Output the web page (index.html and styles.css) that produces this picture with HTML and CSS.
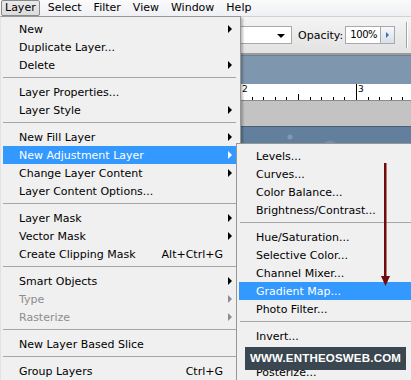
FILE: index.html
```html
<!DOCTYPE html>
<html lang="en">
<head>
    <meta charset="UTF-8">
    <meta name="viewport" content="width=device-width, initial-scale=1.0">
    <title>Layer Menu</title>
    <link rel="stylesheet" href="styles.css">
</head>
<body>
<div class="app">
    <div class="menubar">
        <span class="menubar-item open">Layer</span>
        <span class="menubar-item">Select</span>
        <span class="menubar-item">Filter</span>
        <span class="menubar-item">View</span>
        <span class="menubar-item">Window</span>
        <span class="menubar-item">Help</span>
    </div>

    <div class="options-bar">
        <div class="combo"><span class="combo-arrow"></span></div>
        <span class="opt-label">Opacity:</span>
        <div class="field">100%</div>
        <div class="spin"><span class="spin-arrow"></span></div>
        <div class="opt-sep"></div>
        <div class="check"></div>
    </div>

    <div class="doc-title"></div>

    <div class="ruler">
        <div class="ruler-seg">0</div>
        <div class="ruler-seg">1</div>
        <div class="ruler-seg">2</div>
        <div class="ruler-seg">3</div>
    </div>

    <div class="canvas">
        <div class="photo"></div>
    </div>
</div>

<ul class="menu main-menu">
    <li class="item">New<span class="sub-arrow"></span></li>
    <li class="item">Duplicate Layer...</li>
    <li class="item">Delete<span class="sub-arrow"></span></li>
    <li class="sep"></li>
    <li class="item">Layer Properties...</li>
    <li class="item">Layer Style<span class="sub-arrow"></span></li>
    <li class="sep"></li>
    <li class="item">New Fill Layer<span class="sub-arrow"></span></li>
    <li class="item active">New Adjustment Layer<span class="sub-arrow"></span></li>
    <li class="item">Change Layer Content<span class="sub-arrow"></span></li>
    <li class="item">Layer Content Options...</li>
    <li class="sep"></li>
    <li class="item">Layer Mask<span class="sub-arrow"></span></li>
    <li class="item">Vector Mask<span class="sub-arrow"></span></li>
    <li class="item">Create Clipping Mask<span class="shortcut">Alt+Ctrl+G</span></li>
    <li class="sep"></li>
    <li class="item">Smart Objects<span class="sub-arrow"></span></li>
    <li class="item disabled">Type<span class="sub-arrow"></span></li>
    <li class="item disabled">Rasterize<span class="sub-arrow"></span></li>
    <li class="sep"></li>
    <li class="item">New Layer Based Slice</li>
    <li class="sep"></li>
    <li class="item">Group Layers<span class="shortcut">Ctrl+G</span></li>
</ul>

<ul class="menu sub-menu">
    <li class="item">Levels...</li>
    <li class="item">Curves...</li>
    <li class="item">Color Balance...</li>
    <li class="item">Brightness/Contrast...</li>
    <li class="sep"></li>
    <li class="item">Hue/Saturation...</li>
    <li class="item">Selective Color...</li>
    <li class="item">Channel Mixer...</li>
    <li class="item active">Gradient Map...</li>
    <li class="item">Photo Filter...</li>
    <li class="sep"></li>
    <li class="item">Invert...</li>
    <li class="item">Threshold...</li>
    <li class="item">Posterize...</li>
</ul>

<svg class="pointer" width="12" height="130" viewBox="0 0 12 130">
    <rect x="4" y="3" width="2.5" height="115" fill="#700b0b"/>
    <polygon points="1,116 10,116 5.5,126" fill="#700b0b"/>
</svg>

<div class="watermark">WWW.ENTHEOSWEB.COM</div>
</body>
</html>
```

FILE: styles.css
```css
body {
    margin: 0;
    width: 411px;
    height: 380px;
    overflow: hidden;
    position: relative;
    font-family: "DejaVu Sans", sans-serif;
    font-size: 11px;
    color: #000;
    background-color: #c0c0c0;
}

/* workspace behind the menus */

.menubar {
    height: 16px;
    display: flex;
    align-items: center;
    padding-left: 1px;
    background: linear-gradient(#fbfbfc, #eef0f3);
}

.menubar-item {
    height: 14px;
    line-height: 14px;
    padding: 0 5px 0 4px;
    margin-right: 1px;
    border: 1px solid transparent;
    border-radius: 2px;
}

.menubar-item.open {
    padding: 0 3px 0 3px;
    margin-right: 3px;
    border-color: #8a8a8a;
    background: linear-gradient(#eaeaea, #dcdcdc);
}

.options-bar {
    height: 36px;
    display: flex;
    align-items: center;
    background: linear-gradient(#f4f4f4, #e2e2e2);
    border-top: 1px solid #d2d2d2;
    border-bottom: 2px solid #9b9b9b;
}

.options-bar > * {
    flex-shrink: 0;
}

.combo {
    width: 68px;
    height: 16px;
    margin-left: 222px;
    background-color: #fff;
    border: 1px solid #a9a9a9;
    position: relative;
}

.combo-arrow {
    position: absolute;
    right: 6px;
    top: 7px;
    border-top: 4px solid #000;
    border-left: 4px solid transparent;
    border-right: 4px solid transparent;
}

.opt-label {
    margin-left: 6px;
}

.field {
    width: 30px;
    height: 16px;
    line-height: 16px;
    margin-left: 2px;
    padding-left: 4px;
    font-size: 10px;
    letter-spacing: -0.4px;
    background-color: #fff;
    border: 1px solid #a9a9a9;
}

.spin {
    width: 13px;
    height: 16px;
    border: 1px solid #a9a9a9;
    border-left: none;
    background: linear-gradient(#f6f8fb, #d9dfe8);
    display: flex;
    align-items: center;
    justify-content: center;
}

.spin-arrow {
    border-left: 3px solid #3c6fb4;
    border-top: 3px solid transparent;
    border-bottom: 3px solid transparent;
}

.opt-sep {
    width: 1px;
    height: 26px;
    margin-left: 11px;
    background-color: #a4a4a4;
    border-right: 1px solid #fff;
}

.check {
    width: 10px;
    height: 10px;
    margin-left: 6px;
    border: 1px solid #8c8c8c;
    background-color: #f4f4f4;
}

.doc-title {
    height: 28px;
    border-top: 1px solid #6d7f90;
    background-color: #7e97ae;
}

.ruler {
    height: 16px;
    display: flex;
    padding-left: 8px;
    background-color: #fff;
    border-bottom: 1px solid #8a8a8a;
}

.ruler-seg {
    flex: 0 0 116px;
    box-sizing: border-box;
    border-left: 1px solid #000;
    padding-left: 1px;
    font-size: 9px;
    line-height: 10px;
    background:
        linear-gradient(#000, #000) 57px 100% / 1px 6px no-repeat,
        repeating-linear-gradient(90deg, transparent 0 10.6px, #000 10.6px 11.6px) 0 100% / 100% 3px no-repeat;
}

.canvas {
    height: 300px;
    padding-top: 25px;
    background-color: #c3c3c3;
}

.photo {
    height: 280px;
    border-top: 1px solid #4a5f74;
    background:
        radial-gradient(circle at 60px 12px, rgba(255,255,255,0.25) 0 3px, transparent 4px),
        radial-gradient(circle at 290px 10px, rgba(255,255,255,0.2) 0 2px, transparent 3px),
        radial-gradient(ellipse at 330px 20px, rgba(255,255,255,0.15) 0 6px, transparent 9px),
        #62809d;
}

/* menus */

.menu {
    list-style: none;
    margin: 0;
    padding: 3px 2px;
    position: absolute;
    box-sizing: border-box;
    background-color: #f0f0f0;
    border: 1px solid #979797;
}

.main-menu {
    left: 0;
    top: 16px;
    width: 241px;
    border-left-color: #e2e2e2;
    box-shadow: 2px 2px 2px rgba(0, 0, 0, 0.25);
}

.sub-menu {
    left: 236px;
    top: 143px;
    width: 200px;
    box-shadow: 2px 2px 2px rgba(0, 0, 0, 0.25);
}

.item {
    height: 18px;
    display: flex;
    align-items: center;
    padding: 0 6px 0 16px;
    white-space: nowrap;
}

.sub-menu .item {
    padding-left: 17px;
}

.item.active {
    background-color: #3399ff;
    color: #fff;
}

.item.disabled {
    color: #8d8d8d;
}

.shortcut {
    margin-left: auto;
    margin-right: 9px;
}

.sub-arrow {
    margin-left: auto;
    border-left: 4px solid #000;
    border-top: 4px solid transparent;
    border-bottom: 4px solid transparent;
}

.item.active .sub-arrow {
    border-left-color: #fff;
}

.item.disabled .sub-arrow {
    border-left-color: #8d8d8d;
}

.sep {
    height: 1px;
    margin: 3px 2px 5px 0;
    background-color: #a6a6a6;
}

.sub-menu .sep {
    margin-left: 1px;
}

/* annotations */

.pointer {
    position: absolute;
    left: 380px;
    top: 160px;
}

.watermark {
    position: absolute;
    left: 245px;
    top: 347px;
    width: 161px;
    height: 23px;
    line-height: 23px;
    text-align: center;
    background-color: #3a4650;
    color: #fff;
    font-family: "Liberation Sans", Arial, sans-serif;
    font-weight: bold;
    font-size: 11.5px;
    letter-spacing: 0.2px;
}
```
